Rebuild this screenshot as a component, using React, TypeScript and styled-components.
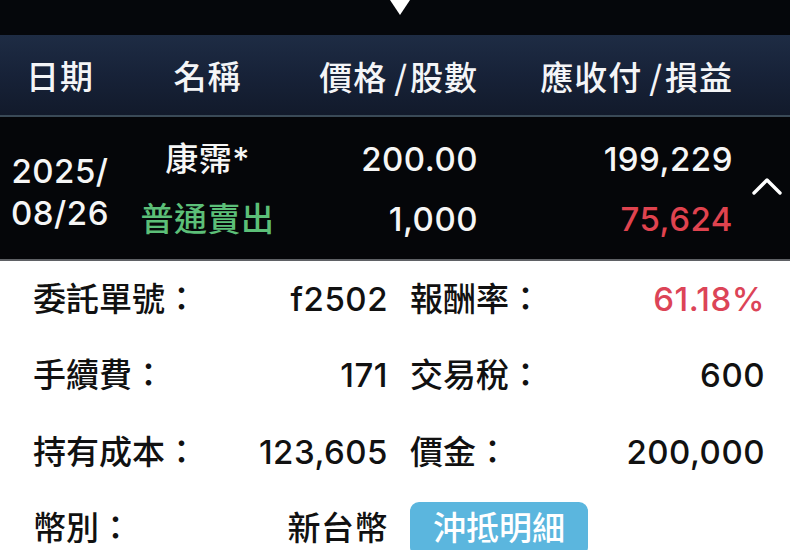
import React from "react";
import styled, { createGlobalStyle } from "styled-components";

const GlobalStyle = createGlobalStyle`
  html, body {
    margin: 0;
    padding: 0;
    background: #ffffff;
  }
  body {
    font-family: Inter, "Noto Sans CJK TC", sans-serif;
    font-weight: 500;
    -webkit-font-smoothing: antialiased;
  }
`;

const details = [
  { label: "委託單號：", value: "f2502", label2: "報酬率：", value2: "61.18%", red: true },
  { label: "手續費：", value: "171", label2: "交易稅：", value2: "600" },
  { label: "持有成本：", value: "123,605", label2: "價金：", value2: "200,000" },
];

export default function App() {
  return (
    <>
      <GlobalStyle />
      <Screen>
        <TopBar>
          <svg width="20" height="16" viewBox="0 0 20 16">
            <polygon points="0,0 20,0 10,15" fill="#ffffff" />
          </svg>
        </TopBar>

        <HeaderBar>
          <HeadCell align="center">日期</HeadCell>
          <HeadCell align="center">名稱</HeadCell>
          <HeadCell align="right">
            價格<Slash>/</Slash>股數
          </HeadCell>
          <HeadCell align="right">
            應收付<Slash>/</Slash>損益
          </HeadCell>
          <span />
        </HeaderBar>

        <TradeRow>
          <DateCell>
            <span>2025/</span>
            <span>08/26</span>
          </DateCell>
          <Stack align="center">
            <Line>康霈*</Line>
            <Line color="#5cbf78">普通賣出</Line>
          </Stack>
          <Stack align="flex-end">
            <Line>200.00</Line>
            <Line>1,000</Line>
          </Stack>
          <Stack align="flex-end">
            <Line>199,229</Line>
            <Line color="#e0434f">75,624</Line>
          </Stack>
          <Chevron>
            <svg width="30" height="18" viewBox="0 0 30 18">
              <polyline
                points="2,16 15,3 28,16"
                fill="none"
                stroke="#ffffff"
                strokeWidth="3.4"
                strokeLinecap="round"
                strokeLinejoin="round"
              />
            </svg>
          </Chevron>
        </TradeRow>

        <Details>
          {details.map((d) => (
            <DetailRow key={d.label}>
              <Pair>
                <Label>{d.label}</Label>
                <Value>{d.value}</Value>
              </Pair>
              <Pair>
                <Label>{d.label2}</Label>
                <Value color={d.red ? "#dc4457" : undefined}>{d.value2}</Value>
              </Pair>
            </DetailRow>
          ))}
          <DetailRow>
            <Pair>
              <Label>幣別：</Label>
              <Value>新台幣</Value>
            </Pair>
            <Pair>
              <OffsetButton>沖抵明細</OffsetButton>
            </Pair>
          </DetailRow>
        </Details>
      </Screen>
    </>
  );
}

// Styled components
const Screen = styled.div`
  width: 790px;
  height: 550px;
  overflow: hidden;
  background: #ffffff;
  display: flex;
  flex-direction: column;
`;

const TopBar = styled.div`
  height: 35px;
  background: #05070b;
  display: flex;
  justify-content: center;
  align-items: flex-start;
  padding-left: 10px;
  flex-shrink: 0;
`;

const HeaderBar = styled.div`
  height: 80px;
  flex-shrink: 0;
  display: grid;
  grid-template-columns: 120px 175px 183px 255px 57px;
  align-items: center;
  background: linear-gradient(180deg, #1e2c44 0%, #172238 50%, #121a2b 100%);
  border-bottom: 2px solid #3a4a57;
  color: #f4f5f7;
`;

const HeadCell = styled.div<{ align: "center" | "right" }>`
  text-align: ${(p) => p.align};
  font-size: 33px;
  font-weight: 500;
  line-height: 1;
  padding-top: 4px;
  letter-spacing: 1px;
`;

const Slash = styled.span`
  padding-left: 7px;
  padding-right: 2px;
  font-family: "Noto Sans CJK TC", sans-serif;
`;

const TradeRow = styled.div`
  height: 142px;
  flex-shrink: 0;
  display: grid;
  grid-template-columns: 120px 175px 183px 255px 57px;
  align-items: center;
  background: #050609;
  border-bottom: 2px solid #5f6165;
  color: #f6f6f6;
`;

const DateCell = styled.div`
  display: flex;
  flex-direction: column;
  align-items: center;
  font-size: 33px;
  line-height: 42px;
  padding-top: 8px;
  letter-spacing: 0.5px;
`;

const Stack = styled.div<{ align: string }>`
  display: flex;
  flex-direction: column;
  align-items: ${(p) => p.align};
  gap: 20px;
  padding-top: 2px;
`;

const Line = styled.span<{ color?: string }>`
  font-size: 33px;
  line-height: 40px;
  color: ${(p) => p.color || "#f6f6f6"};
  letter-spacing: 0.5px;
  white-space: nowrap;
`;

const Chevron = styled.div`
  display: flex;
  justify-content: flex-end;
  padding-right: 8px;
  padding-bottom: 4px;
`;

const Details = styled.div`
  display: flex;
  flex-direction: column;
  padding: 0 25px 0 33px;
  color: #111111;
`;

const DetailRow = styled.div`
  height: 76.5px;
  display: grid;
  grid-template-columns: 1fr 1fr;
  column-gap: 22px;
  align-items: center;
`;

const Pair = styled.div`
  display: flex;
  justify-content: space-between;
  align-items: center;
`;

const Label = styled.span`
  font-size: 33px;
  line-height: 1;
  white-space: nowrap;
`;

const Value = styled.span<{ color?: string }>`
  font-size: 33px;
  line-height: 1;
  color: ${(p) => p.color || "#111111"};
  letter-spacing: 0.5px;
  white-space: nowrap;
`;

const OffsetButton = styled.button`
  font-family: inherit;
  font-weight: 500;
  font-size: 33px;
  line-height: 1;
  color: #ffffff;
  background: #5bb6de;
  border: none;
  border-radius: 9px;
  padding: 10px 23px 11px;
  cursor: pointer;
`;
